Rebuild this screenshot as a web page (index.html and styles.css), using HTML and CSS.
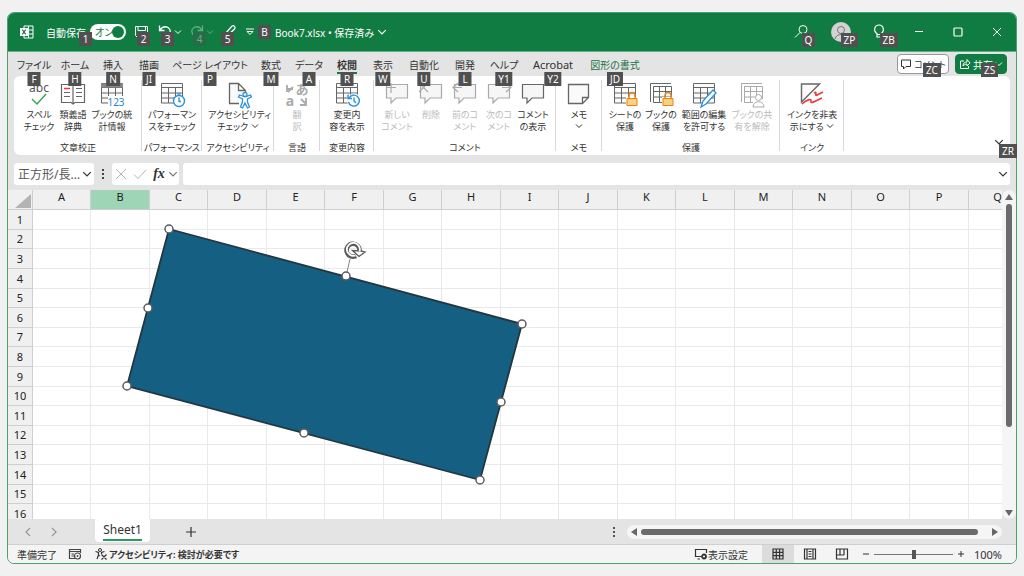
FILE: index.html
```html
<!DOCTYPE html>
<html lang="ja">
<head>
<meta charset="UTF-8" />
<meta name="viewport" content="width=device-width, initial-scale=1" />
<title>Book7.xlsx</title>
<link rel="stylesheet" href="styles.css">
</head>
<body>

<svg class="defs" aria-hidden="true">
  <symbol id="chev" viewBox="0 0 8 8"><path d="M1 2.5 4 5.5 7 2.5" fill="none" stroke="currentColor" /></symbol>
  <symbol id="table" viewBox="0 0 24 26">
    <path d="M1 1.5h22v20H1z" fill="#fafafa" />
    <path d="M1.5 1.5h21v19.5h-21zM1.5 5.5h21M1.5 11h21M1.5 16h21M8.5 5v16M15.5 5v16" fill="none" stroke="currentColor" />
  </symbol>
  <symbol id="sheets" viewBox="0 0 24 26">
    <path d="M1.5 20V1.5H22M4.5 20.5V4.5H22.5V20.5zM4.5 9.5h18M4.5 15h18M10.5 4.5v16M16.5 4.5v16" fill="none" stroke="currentColor" />
  </symbol>
  <symbol id="bubble" viewBox="0 0 24 26">
    <path d="M1.5 2.5h21v13.5H11l-5 5v-5H1.5z" fill="#f6f6f6" stroke="currentColor" stroke-width="1.2" />
  </symbol>
  <symbol id="lock" viewBox="0 0 12 16">
    <path d="M3 8V4.5a3 3 0 0 1 6 0V8" fill="none" stroke="#e8811a" stroke-width="1.5" />
    <path d="M1 7.5h10v7H1z" fill="#f9d27d" stroke="#e8811a" />
  </symbol>
</svg>

<div class="window">

  <header class="titlebar">
    <svg class="app-icon" viewBox="0 0 14 14"><path d="M4 1h9v12H4zM8.5 1v12M4 5h9M4 9h9" fill="none" stroke="#fff" /><path d="M0 3h8v8H0z" fill="#fff" /><path d="M2.3 4.7 5.7 9.3M5.7 4.7 2.3 9.3" stroke="#107c41" stroke-width="1.2" /></svg>
    <label class="autosave">
      <span class="autosave-text">自動保存<span class="key">1</span></span>
      <span class="toggle"><input type="checkbox" checked /><span class="toggle-text">オン</span></span>
    </label>
    <div class="quick">
      <button aria-label="上書き保存"><svg class="ico16" viewBox="0 0 16 16"><path d="M1.5 2.5h12v11h-10l-2-2zM4 2.5v4h7.5v-4M5 13V9.5h6V13" fill="none" stroke="currentColor" /></svg><span class="key">2</span></button>
      <button aria-label="元に戻す"><svg class="ico16" viewBox="0 0 16 16"><path d="M1.5 1.5v5h5M1.5 6.5C4 3 7 2 10 3.5c3 2 3 5 0 8l-3 3" fill="none" stroke="currentColor" stroke-width="1.3" /></svg><svg class="ico8"><use href="#chev" /></svg><span class="key">3</span></button>
      <button aria-label="やり直し" disabled><svg class="ico16" viewBox="0 0 16 16"><path d="M12.5 1.5v5h-5M12.5 6.5C10 3 7 2 4 3.5c-3 2-3 5 0 8l3 3" fill="none" stroke="currentColor" stroke-width="1.3" /></svg><svg class="ico8"><use href="#chev" /></svg><span class="key">4</span></button>
      <button aria-label="ペン"><svg class="ico16" viewBox="0 0 16 16"><path d="M1 13c2 1 3-1 2-3l7-8c2-1 4 1 2.500 3L5 12" fill="none" stroke="currentColor" stroke-width="1.3" /></svg><span class="key key-left">5</span></button>
      <button aria-label="クイック アクセス"><svg class="ico8" viewBox="0 0 8 8"><path d="M0 1h8M1 3.500h6L4 6.500z" fill="none" stroke="currentColor" /></svg></button>
    </div>
    <button class="doc"><span class="key key-inline">B</span>Book7.xlsx • 保存済み<svg class="ico10"><use href="#chev" /></svg></button>
    <div class="title-right">
      <button class="wide" aria-label="検索"><svg class="ico16" viewBox="0 0 16 16"><circle cx="9" cy="5.5" r="4" fill="none" stroke="currentColor" /><path d="M6 8.5 1 13.5" stroke="currentColor" /></svg><span class="key">Q</span></button>
      <button class="wide" aria-label="アカウント"><svg class="avatar" viewBox="0 0 20 20"><circle cx="10" cy="10" r="10" fill="#d2d2d2" /><circle cx="10" cy="8" r="3.5" fill="none" stroke="#777" /><path d="M4 17c1-6 11-6 12 0" fill="none" stroke="#777" /></svg><span class="key">ZP</span></button>
      <button class="wide" aria-label="ヒント"><svg class="ico16" viewBox="0 0 16 16"><path d="M5 13V9.500C1 7 2.500 1 7 1s6 6 2 8.500V13zM5 10.500h4" fill="none" stroke="currentColor" stroke-width="1.2" /></svg><span class="key">ZB</span></button>
      <button class="wide" aria-label="最小化"><svg class="ico10" viewBox="0 0 10 10"><path d="M1 4.500h8" stroke="currentColor" /></svg></button>
      <button class="wide" aria-label="最大化"><svg class="ico10" viewBox="0 0 10 10"><rect x="1" y="1" width="8" height="8" rx="1" fill="none" stroke="currentColor" stroke-width="1.2" /></svg></button>
      <button class="wide" aria-label="閉じる"><svg class="ico10" viewBox="0 0 10 10"><path d="M1 1l8 8M9 1 1 9" stroke="currentColor" /></svg></button>
    </div>
  </header>

  <nav class="tabs">
    <button class="tab tab-m">ファイル<span class="key">F</span></button>
    <button class="tab tab-s">ホーム<span class="key">H</span></button>
    <button class="tab">挿入<span class="key">N</span></button>
    <button class="tab">描画<span class="key">JI</span></button>
    <button class="tab tab-xl">ページ レイアウト<span class="key">P</span></button>
    <button class="tab">数式<span class="key">M</span></button>
    <button class="tab tab-s">データ<span class="key">A</span></button>
    <button class="tab active">校閲<span class="key">R</span></button>
    <button class="tab">表示<span class="key">W</span></button>
    <button class="tab tab-l">自動化<span class="key">U</span></button>
    <button class="tab">開発<span class="key">L</span></button>
    <button class="tab tab-m">ヘルプ<span class="key">Y1</span></button>
    <button class="tab tab-acrobat">Acrobat<span class="key">Y2</span></button>
    <button class="tab tab-shape">図形の書式<span class="key">JD</span></button>
    <div class="tabs-right">
      <button class="pill"><svg class="ico12" viewBox="0 0 12 12"><path d="M1.5 2h9v6.500H6l-2.500 2.500V8.500h-2z" fill="none" stroke="currentColor" /></svg>コメント<span class="key">ZC</span></button>
      <button class="pill pill-green"><svg class="ico12" viewBox="0 0 12 12"><path d="M5 3H1.500v7.500h8V8M4 8c0-3 2-4 4-4V1.500l3 3.500-3 3V6C6 6 5 7 4 8z" fill="none" stroke="currentColor" /></svg>共有<svg class="ico8"><use href="#chev" /></svg><span class="key">ZS</span></button>
    </div>
  </nav>

  <section class="ribbon">
    <div class="group g-proof">
      <div class="tools">
        <button class="tool w32"><svg viewBox="0 0 24 26"><text x="12" y="10" text-anchor="middle" font-size="12" fill="#555">abc</text><path d="M5 17l5 5 9-10" fill="none" stroke="#2fa84f" stroke-width="1.4" /></svg>スペル<br>チェック</button>
        <button class="tool w36"><svg viewBox="0 0 24 26"><path d="M.5 2.500h9.500l2 1.500 2-1.500h9.500v18H14l-2 1.500-2-1.500H.500zM12 4v18M15 6.500h6M15 10.500h6M15 14.500h6M3 10.500h6M3 14.500h6" fill="none" stroke="currentColor" stroke-width="1.2" /><path d="M3 6.500h6" stroke="#f0383b" stroke-width="1.5" /></svg>類義語<br>辞典</button>
        <button class="tool w42"><svg viewBox="0 0 24 26"><use href="#table" /><path d="M1 1.500h22v4H1z" fill="#888" /><path d="M8 14h16v12H8z" fill="#fff" /><text x="16" y="24" text-anchor="middle" font-size="10" fill="#1e88d2">123</text></svg>ブックの統<br>計情報</button>
      </div>
      <div class="group-name">文章校正</div>
    </div>
    <div class="group g-perf">
      <div class="tools">
        <button class="tool w50"><svg viewBox="0 0 24 26"><use href="#table" /><circle cx="19" cy="19" r="5.5" fill="#fff" stroke="#2a92dc" stroke-width="1.4" /><path d="M19 15.500V19.500h2M17.500 12h3" fill="none" stroke="#2a92dc" stroke-width="1.4" /></svg>パフォーマン<br>スをチェック</button>
      </div>
      <div class="group-name">パフォーマンス</div>
    </div>
    <div class="group g-acc">
      <div class="tools">
        <button class="tool w60"><svg viewBox="0 0 24 26"><path d="M3.500 1.500h9l7 7v13h-16zM12.500 1.500v7h7" fill="#fafafa" stroke="currentColor" stroke-width="1.3" /><path d="M13 13h11v12H13z" fill="#fff" /><path d="M18 14.500l-4.500-1.500-1 2 4 2v3l-2 5 2 1 2.500-5 2.500 5 2-1-2-5v-3l4-2-1-2-4.500 1.500z" fill="#fff" stroke="#2a92dc" stroke-width="1.3" /><circle cx="19" cy="12.500" r="2" fill="#fff" stroke="#2a92dc" stroke-width="1.3" /></svg>アクセシビリティ<br>チェック <svg class="ico8"><use href="#chev" /></svg></button>
      </div>
      <div class="group-name">アクセシビリティ</div>
    </div>
    <div class="group g-lang">
      <div class="tools">
        <button class="tool w36" disabled><svg viewBox="0 0 24 26"><path d="M2 3v7M2 7h6M3 10l5-5M21 16v7M15 23h6v-6M16 17l5 5" fill="none" stroke="currentColor" stroke-width="1.8" /><text x="17" y="12" text-anchor="middle" font-size="13" font-weight="700" fill="currentColor">あ</text><text x="5" y="24" text-anchor="middle" font-size="14" font-weight="700" fill="currentColor">a</text></svg>翻<br>訳</button>
      </div>
      <div class="group-name">言語</div>
    </div>
    <div class="group g-changes">
      <div class="tools">
        <button class="tool w42"><svg viewBox="0 0 24 26"><use href="#table" /><circle cx="19" cy="18.5" r="7" fill="#fff" /><path d="M14 16a5.500 5.500 0 1 1-.500 4M13 12.500V16.500h4M19 15.500v3.500l2 2" fill="none" stroke="#2a92dc" stroke-width="1.4" /></svg>変更内<br>容を表示</button>
      </div>
      <div class="group-name">変更内容</div>
    </div>
    <div class="group g-comment">
      <div class="tools">
        <button class="tool w34" disabled><svg viewBox="0 0 24 26"><use href="#bubble" /><path d="M1 5.500h10M6 1v10" stroke="currentColor" stroke-width="1.2" /></svg>新しい<br>コメント</button>
        <button class="tool w34" disabled><svg viewBox="0 0 24 26"><use href="#bubble" /><path d="M0 1l9 9M9 1l-9 9" stroke="currentColor" stroke-width="1.2" /></svg>削除</button>
        <button class="tool w34" disabled><svg viewBox="0 0 24 26"><use href="#bubble" /><path d="M5 1 0 5.500 5 10M0 5.500h9" fill="none" stroke="currentColor" stroke-width="1.2" /></svg>前のコ<br>メント</button>
        <button class="tool w34" disabled><svg viewBox="0 0 24 26"><use href="#bubble" /><path d="M19 1l5 4.500-5 4.500M24 5.500h-9" fill="none" stroke="currentColor" stroke-width="1.2" /></svg>次のコ<br>メント</button>
        <button class="tool w34"><svg viewBox="0 0 24 26"><use href="#bubble" /></svg>コメント<br>の表示</button>
      </div>
      <div class="group-name">コメント</div>
    </div>
    <div class="group g-memo">
      <div class="tools">
        <button class="tool w36"><svg viewBox="0 0 24 26"><path d="M1.500 2.500h20v13l-6 6h-14zM21.500 15.500h-6v6" fill="#fafafa" stroke="currentColor" stroke-width="1.3" /></svg>メモ<br><svg class="ico8"><use href="#chev" /></svg></button>
      </div>
      <div class="group-name">メモ</div>
    </div>
    <div class="group g-protect">
      <div class="tools">
        <button class="tool w36"><svg viewBox="0 0 24 26"><use href="#table" /><path d="M13 15h11v10H13z" fill="#fff" /><use href="#lock" x="13" y="9" width="12" height="16" /></svg>シートの<br>保護</button>
        <button class="tool w36"><svg viewBox="0 0 24 26"><use href="#sheets" /><path d="M13 15h11v10H13z" fill="#fff" /><use href="#lock" x="13" y="9" width="12" height="16" /></svg>ブックの<br>保護</button>
        <button class="tool w50"><svg viewBox="0 0 24 26"><use href="#table" /><path d="M9 25l2-6 10-11 3 3-10 11z" fill="#fff" stroke="#2a92dc" stroke-width="1.3" /></svg>範囲の編集<br>を許可する</button>
        <button class="tool w46" disabled><svg viewBox="0 0 24 26"><use href="#sheets" /><path d="M13 17h11v8H13z" fill="#fff" /><circle cx="18.5" cy="15.5" r="3" fill="#fff" stroke="currentColor" /><path d="M13 25c0-7 11-7 11 0z" fill="#fff" stroke="currentColor" /></svg>ブックの共<br>有を解除</button>
      </div>
      <div class="group-name">保護</div>
    </div>
    <div class="group g-ink">
      <div class="tools">
        <button class="tool w50"><svg viewBox="0 0 24 26"><path d="M1.500 20V2h18z" fill="#fafafa" stroke="currentColor" stroke-width="1.4" /><path d="M14 11c4-3 0 4 3 2l6-3M2 22c4-4 10-6 9-3s3 1 11-3" fill="none" stroke="#f0383b" stroke-width="1.6" /></svg>インクを非表<br>示にする <svg class="ico8"><use href="#chev" /></svg></button>
      </div>
      <div class="group-name">インク</div>
    </div>
    <button class="collapse" aria-label="リボンを折りたたむ"><svg class="ico10"><use href="#chev" /></svg><span class="key">ZR</span></button>
  </section>

  <div class="formula-bar">
    <div class="name-box">
      <select aria-label="名前ボックス"><option>正方形/長...</option></select>
      <svg class="ico10"><use href="#chev" /></svg>
    </div>
    <svg class="grip" viewBox="0 0 4 12"><path d="M1 1h2v2H1zM1 5h2v2H1zM1 9h2v2H1z" fill="#444" /></svg>
    <div class="fx-box">
      <button aria-label="キャンセル" disabled><svg class="ico12" viewBox="0 0 12 12"><path d="M1 1l10 10M11 1 1 11" stroke="currentColor" /></svg></button>
      <button aria-label="入力" disabled><svg class="ico12" viewBox="0 0 12 12"><path d="M0 6.500 4 10.500 12 2" fill="none" stroke="currentColor" /></svg></button>
      <button class="fx">fx</button>
      <svg class="ico10"><use href="#chev" /></svg>
    </div>
    <div class="formula-input">
      <input type="text" aria-label="数式バー" />
      <svg class="ico10"><use href="#chev" /></svg>
    </div>
  </div>

  <main class="sheet">
    <div class="cells">
      <table>
        <thead><tr id="columns"><th class="corner"><svg viewBox="0 0 16 14"><path d="M16 0v14H0z" fill="#b4b4b4" /></svg></th></tr></thead>
        <tbody id="rows"></tbody>
      </table>
      <svg class="shape" viewBox="0 0 420 280">
        <path d="M49 9 402 104 360 260 7 166z" fill="#156082" stroke="#23363f" stroke-width="1.8" />
        <path d="M226 56 230 39" stroke="#888" />
        <g fill="#fff" stroke="#5c5c5c" stroke-width="1.5">
          <circle cx="49" cy="9" r="4" /><circle cx="226" cy="56" r="4" /><circle cx="402" cy="104" r="4" />
          <circle cx="28" cy="88" r="4" /><circle cx="381" cy="182" r="4" />
          <circle cx="7" cy="166" r="4" /><circle cx="184" cy="213" r="4" /><circle cx="360" cy="260" r="4" />
        </g>
        <path d="M236 36A6.500 6.500 0 1 1 239.500 31" fill="none" stroke="#5c5c5c" stroke-width="4.6" />
        <path d="M232.500 30.500l6.500 6 6-4.500-4-1z" fill="#fff" stroke="#5c5c5c" stroke-width="1.3" />
        <path d="M235.500 35.500A6.500 6.500 0 1 1 239.500 31.500" fill="none" stroke="#fff" stroke-width="1.8" />
      </svg>
    </div>
    <div class="vscroll">
      <svg class="ico10" viewBox="0 0 10 10"><path d="M5 2 9 8H1z" fill="#666" /></svg>
      <div class="vtrack"><div class="vthumb"></div></div>
      <svg class="ico10" viewBox="0 0 10 10"><path d="M5 8 9 2H1z" fill="#666" /></svg>
    </div>
  </main>

  <div class="sheet-bar">
    <button class="nav-arrow" aria-label="前のシート"><svg class="ico10" viewBox="0 0 10 10"><path d="M7 1 3 5l4 4" fill="none" stroke="currentColor" stroke-width="1.2" /></svg></button>
    <button class="nav-arrow" aria-label="次のシート"><svg class="ico10" viewBox="0 0 10 10"><path d="M3 1l4 4-4 4" fill="none" stroke="currentColor" stroke-width="1.2" /></svg></button>
    <button class="sheet-tab"><span>Sheet1</span></button>
    <button class="add-sheet" aria-label="新しいシート"><svg class="ico10" viewBox="0 0 10 10"><path d="M5 0v10M0 5h10" stroke="currentColor" stroke-width="1.2" /></svg></button>
    <svg class="grip" viewBox="0 0 4 12"><path d="M1 1h2v2H1zM1 5h2v2H1zM1 9h2v2H1z" fill="#555" /></svg>
    <div class="hscroll">
      <svg class="ico10" viewBox="0 0 10 10"><path d="M2 5 8 1v8z" fill="#666" /></svg>
      <div class="htrack"><div class="hthumb"></div></div>
      <svg class="ico10" viewBox="0 0 10 10"><path d="M8 5 2 1v8z" fill="#666" /></svg>
    </div>
  </div>

  <footer class="status">
    <span class="ready">準備完了</span>
    <svg class="ico12" viewBox="0 0 12 12"><path d="M1 1.500h11M.500 1v9.500H6M11.500 1v4M1 3.500h11M2.500 6H5M2.500 8H5" fill="none" stroke="#444" stroke-width="1.2" /><circle cx="8.5" cy="8" r="3" fill="#fff" stroke="#444" stroke-width="1.2" /><circle cx="8.5" cy="8" r="1" fill="#444" /></svg>
    <button class="acc"><svg class="ico12" viewBox="0 0 12 12"><circle cx="5" cy="2" r="1.5" fill="none" stroke="currentColor" /><path d="M.500 3.500l3 1V7l-1.500 4M9.500 3.500l-3 1V6M3.500 7.500 5 8M6.500 6.500l5 5M11.500 6.500l-5 5" fill="none" stroke="currentColor" stroke-width="1.2" /></svg>アクセシビリティ: 検討が必要です</button>
    <button class="display"><svg class="ico12" viewBox="0 0 12 12"><path d="M6 8.500H.500v-7h11V5M2.500 11H5" fill="none" stroke="currentColor" stroke-width="1.2" /><circle cx="9" cy="8.5" r="2" fill="none" stroke="currentColor" stroke-width="1.8" /></svg>表示設定</button>
    <div class="views">
      <button class="view on" aria-label="標準"><svg class="ico12" viewBox="0 0 12 12"><path d="M1 1h10v10H1zM1 4.300h10M1 7.600h10M4.300 1v10M7.600 1v10" fill="none" stroke="currentColor" stroke-width="1.2" /></svg></button>
      <button class="view" aria-label="ページ レイアウト"><svg class="ico12" viewBox="0 0 12 12"><path d="M.500 1h11v10H.500zM3 1v10M9 1v10M4.500 3.500h3M4.500 6h3M4.500 8.500h3" fill="none" stroke="currentColor" stroke-width="1.2" /></svg></button>
      <button class="view" aria-label="改ページ"><svg class="ico12" viewBox="0 0 12 12"><path d="M.500 1h11v10H.500zM4 1v6M8 1v6M1 7h7" fill="none" stroke="currentColor" stroke-width="1.2" /></svg></button>
    </div>
    <div class="zoom">
      <button aria-label="縮小"><svg class="ico8" viewBox="0 0 8 8"><path d="M1 4h6" stroke="currentColor" /></svg></button>
      <input type="range" min="0" max="100" value="50" aria-label="ズーム" />
      <button aria-label="拡大"><svg class="ico8" viewBox="0 0 8 8"><path d="M1 4h6M4 1v6" stroke="currentColor" /></svg></button>
    </div>
    <span class="percent">100%</span>
  </footer>

</div>

<script src="script.js"></script>
</body>
</html>
```

FILE: styles.css
```css
* {
  box-sizing: border-box;
}

body {
  margin: 0;
  padding: 12px 7px;
  height: 100vh;
  background: #f1f1f1;
  color: #333;
  font-family: "Noto Sans", "Noto Sans CJK JP", sans-serif;
  font-size: 10px;
  font-feature-settings: "palt";
}

button, input, select {
  font: inherit;
  font-feature-settings: inherit;
  color: inherit;
  background: none;
  border: none;
  padding: 0;
  margin: 0;
}

button {
  position: relative;
  display: flex;
  align-items: center;
  justify-content: center;
  white-space: nowrap;
}

svg {
  flex: none;
  overflow: visible;
}

.defs { position: absolute; width: 0; height: 0; }
.ico8 { width: 8px; height: 8px; }
.ico10 { width: 10px; height: 10px; }
.ico12 { width: 12px; height: 12px; }
.ico16 { width: 16px; height: 16px; }

.window {
  height: 100%;
  display: flex;
  flex-direction: column;
  background: #e4e4e4;
  border: 1px solid #4ba173;
  border-radius: 7px;
}

/* Key tips */
.key {
  position: absolute;
  z-index: 3;
  min-width: 13px;
  height: 14px;
  padding: 0 3px;
  background: #505050;
  color: #fff;
  font-size: 10px;
  font-weight: 400;
  line-height: 14px;
  text-align: center;
}

/* Title bar */
.titlebar {
  flex: none;
  height: 39px;
  display: flex;
  align-items: center;
  padding-left: 12px;
  background: #107c41;
  border-bottom: 1px solid #5eae82;
  border-radius: 6px 6px 0 0;
  color: #fff;
}

.app-icon {
  width: 14px;
  height: 14px;
  margin-right: 12px;
}

.autosave {
  display: flex;
  align-items: center;
  gap: 4px;
}

.autosave-text {
  position: relative;
}

.autosave .key {
  right: -6px;
  top: 7px;
}

.toggle {
  position: relative;
  display: flex;
}

.toggle input {
  appearance: none;
  width: 36px;
  height: 16px;
  background: #fff;
  border-radius: 8px;
}

.toggle input::after {
  content: "";
  display: block;
  width: 12px;
  height: 12px;
  margin: 2px 2px 2px 22px;
  border-radius: 50%;
  background: #107c41;
}

.toggle-text {
  position: absolute;
  left: 5px;
  top: 0;
  line-height: 16px;
  color: #107c41;
}

.quick {
  display: flex;
  gap: 8px;
  margin-left: 8px;
}

.quick .key {
  left: 3px;
  top: 8px;
}

.quick .key-left {
  left: -1px;
}

.quick button:disabled {
  opacity: 0.35;
}

.doc {
  gap: 3px;
  margin-left: 4px;
}

.doc .key-inline {
  position: static;
  margin-right: 1px;
}

.title-right {
  display: flex;
  margin-left: auto;
}

.wide {
  width: 39px;
  height: 20px;
}

.wide .key {
  left: 50%;
  top: 11px;
}

.avatar {
  width: 20px;
  height: 20px;
}

/* Ribbon tabs */
.tabs {
  flex: none;
  height: 24px;
  display: flex;
  padding-left: 5px;
}

.tab { width: 36px; }
.tab-s { width: 40px; }
.tab-m { width: 42px; }
.tab-l { width: 46px; }
.tab-acrobat { width: 56px; font-size: 11px; }
.tab-shape { width: 68px; color: #207245; }
.tab-xl { width: 86px; }

.tab .key {
  top: 20px;
  left: 50%;
  transform: translateX(-50%);
}

.tab.active {
  font-weight: 700;
}

.tab.active::after {
  content: "";
  position: absolute;
  left: 8px;
  right: 8px;
  bottom: 2px;
  height: 2px;
  background: #107c41;
}

.tabs-right {
  display: flex;
  align-items: center;
  gap: 6px;
  margin-left: auto;
  padding-right: 9px;
}

.pill {
  width: 52px;
  height: 20px;
  gap: 2px;
  background: #fff;
  border: 1px solid #999;
  border-radius: 4px;
  font-size: 9px;
}

.pill .key {
  left: 25px;
  top: 8px;
}

.pill-green {
  background: #107c41;
  border-color: #107c41;
  color: #fff;
  font-size: 10px;
}

/* Ribbon */
.ribbon {
  position: relative;
  flex: none;
  height: 79px;
  display: flex;
  margin: 0 6px;
  background: #fff;
  border-radius: 6px;
}

.group {
  position: relative;
  display: flex;
  flex-direction: column;
  justify-content: space-between;
  padding: 6px 0 1px;
}

.group::after {
  content: "";
  position: absolute;
  right: 0;
  top: 4px;
  bottom: 4px;
  width: 1px;
  background: #d8d8d8;
}

.g-proof { width: 128px; }
.g-perf { width: 60px; }
.g-acc { width: 72px; }
.g-lang { width: 46px; }
.g-changes { width: 54px; }
.g-comment { width: 182px; }
.g-memo { width: 46px; }
.g-protect { width: 178px; }
.g-ink { width: 64px; }

.tools {
  display: flex;
  align-items: flex-start;
  justify-content: center;
}

.group-name {
  font-size: 9px;
  line-height: 12px;
  text-align: center;
  white-space: nowrap;
}

.tool {
  display: block;
  font-size: 9px;
  line-height: 12px;
  text-align: center;
}

.tool > svg:first-child {
  display: block;
  width: 24px;
  height: 26px;
  margin: 0 auto 1px;
  color: #666;
}

.tool:disabled {
  color: #bbb;
}

.tool:disabled > svg:first-child {
  color: #aaa;
}

.w32 { width: 32px; }
.w34 { width: 34px; }
.w36 { width: 36px; }
.w42 { width: 42px; }
.w46 { width: 46px; }
.w50 { width: 50px; }
.w60 { width: 60px; }

.collapse {
  position: absolute;
  right: 6px;
  bottom: 8px;
}

.collapse .key {
  left: 5px;
  top: 7px;
}

/* Formula bar */
.formula-bar {
  flex: none;
  height: 22px;
  display: flex;
  align-items: center;
  margin: 8px 6px 5px;
}

.name-box, .fx-box, .formula-input {
  height: 22px;
  display: flex;
  align-items: center;
  background: #fff;
  border-radius: 3px;
}

.name-box {
  width: 80px;
  padding: 0 2px 0 4px;
}

.name-box select {
  appearance: none;
  flex: 1;
  min-width: 0;
  font-size: 12px;
  color: #555;
}

.grip {
  width: 4px;
  height: 12px;
}

.formula-bar .grip {
  margin: 0 7px;
}

.fx-box {
  width: 67px;
  gap: 7px;
  padding-left: 3px;
  color: #777;
}

.fx-box button:disabled {
  color: #b5b5b5;
}

.fx-box .fx {
  width: 12px;
  font: italic bold 14px "Liberation Serif", serif;
  color: #333;
}

.fx-box > .ico10 {
  margin-left: -4px;
}

.formula-input {
  flex: 1;
  margin-left: 4px;
  padding-right: 2px;
}

.formula-input input {
  flex: 1;
}

/* Sheet */
.sheet {
  flex: 1;
  min-height: 0;
  display: flex;
}

.cells {
  position: relative;
  flex: 1;
  min-width: 0;
  overflow: hidden;
  background: #fff;
}

table {
  table-layout: fixed;
  width: 100%;
  border-collapse: separate;
  border-spacing: 0;
}

th {
  padding: 0;
  background: #f0f0f0;
  border-right: 1px solid #cfcfcf;
  border-bottom: 1px solid #cfcfcf;
  font-size: 11px;
  font-weight: 400;
  line-height: 14px;
  color: #222;
}

thead th {
  width: 58px;
  height: 20px;
  vertical-align: top;
}

thead th:nth-child(odd) {
  width: 59px;
}

thead .corner:first-child {
  width: 25px;
  padding: 4px 1px 0 7px;
}

.corner svg {
  display: block;
  width: 16px;
  height: 14px;
}

th.selected {
  background: #9fd5b7;
}

tbody th, td {
  height: 20px;
}

tbody tr:nth-child(5n) > *,
tbody tr:nth-child(5n+2) > * {
  height: 19px;
}

td {
  padding: 0;
  border-right: 1px solid #e9e9e9;
  border-bottom: 1px solid #e9e9e9;
}

.shape {
  position: absolute;
  left: 112px;
  top: 30px;
  width: 420px;
  height: 280px;
}

.vscroll {
  width: 14px;
  display: flex;
  flex-direction: column;
  align-items: center;
  padding: 2px 0 1px;
  background: #f5f5f5;
  border-radius: 7px;
}

.vtrack {
  flex: 1;
  padding: 2px 0;
}

.vthumb {
  width: 6px;
  height: 74%;
  background: #6b6b6b;
  border-radius: 3px;
}

/* Sheet tabs */
.sheet-bar {
  flex: none;
  height: 26px;
  display: flex;
  align-items: center;
  padding: 0 14px 0 7px;
  border-bottom: 1px solid #cfcfcf;
}

.nav-arrow {
  width: 26px;
  height: 20px;
  color: #999;
}

.sheet-tab {
  align-self: flex-start;
  width: 55px;
  height: 23px;
  margin-left: 28px;
  background: #fff;
  border-radius: 0 0 4px 4px;
  font-size: 12px;
}

.sheet-tab span {
  line-height: 18px;
  border-bottom: 2px solid #2c9a5e;
}

.add-sheet {
  width: 20px;
  height: 20px;
  margin-left: 31px;
}

.sheet-bar .grip {
  margin-left: auto;
  margin-right: 11px;
}

.hscroll {
  flex: 0 0 38%;
  height: 14px;
  display: flex;
  align-items: center;
  padding: 0 2px;
  background: #f5f5f5;
  border-radius: 7px;
}

.htrack {
  flex: 1;
  padding: 0 2px;
}

.hthumb {
  width: 97%;
  height: 6px;
  background: #6b6b6b;
  border-radius: 3px;
}

/* Status bar */
.status {
  flex: none;
  height: 18px;
  display: flex;
  align-items: center;
  padding: 0 14px 0 9px;
  background: #f4f4f4;
  border-radius: 0 0 6px 6px;
}

.ready {
  width: 52px;
}

.acc {
  gap: 2px;
  margin-left: 14px;
  font-size: 9px;
  font-weight: 700;
}

.display {
  gap: 1px;
  margin-left: auto;
}

.views {
  display: flex;
  margin-left: 14px;
}

.view {
  width: 32px;
  height: 18px;
}

.view.on {
  background: #dcdcdc;
}

.zoom {
  display: flex;
  align-items: center;
  gap: 4px;
  margin-left: 4px;
}

.zoom input {
  appearance: none;
  width: 79px;
  height: 10px;
  background: linear-gradient(#777, #777) center / 100% 1px no-repeat;
}

.zoom input::-webkit-slider-thumb {
  appearance: none;
  width: 4px;
  height: 9px;
  background: #555;
}

.percent {
  width: 37px;
  text-align: right;
  font-size: 11px;
}
```

FILE: script.js
```js
const columns = document.getElementById('columns');
const rows = document.getElementById('rows');
const letters = 'ABCDEFGHIJKLMNOPQRSTUVWXYZ'.split('');

letters.forEach(letter => {
  const th = document.createElement('th');
  th.textContent = letter;
  if (letter === 'B') th.className = 'selected';
  columns.appendChild(th);
});

for (let i = 1; i <= 40; i++) {
  const tr = document.createElement('tr');
  tr.innerHTML = `<th>${i}</th>` + '<td></td>'.repeat(letters.length);
  rows.appendChild(tr);
}
```
